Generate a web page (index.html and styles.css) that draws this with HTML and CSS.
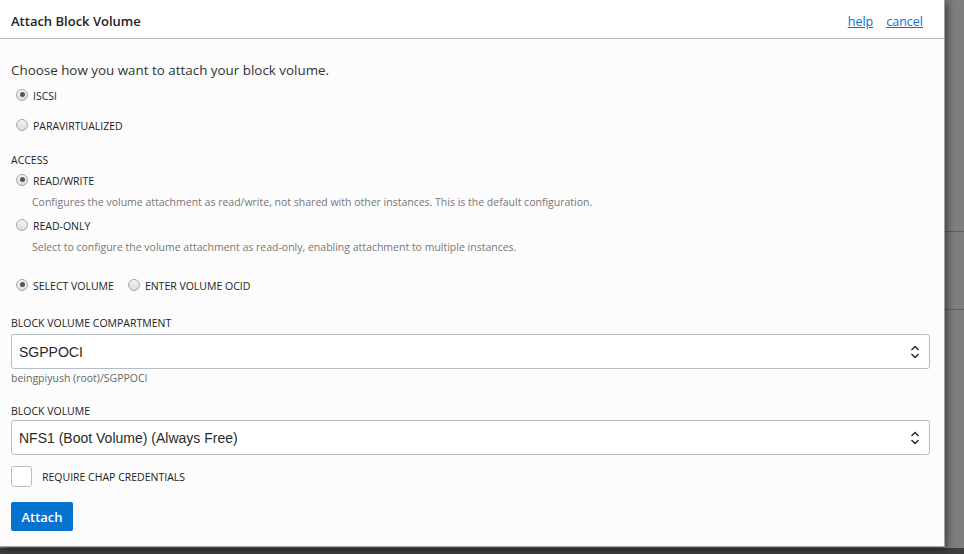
FILE: index.html
```html
<!DOCTYPE html>
<html lang="en">
<head>
    <meta charset="UTF-8">
    <meta name="viewport" content="width=device-width, initial-scale=1.0">
    <title>Attach Block Volume</title>
    <link rel="stylesheet" href="styles.css">
</head>
<body>
    <div class="backdrop">
        <div class="bg-row first"></div>
        <div class="bg-row second"></div>
        <div class="bg-row third"></div>
        <div class="bg-footer"></div>
    </div>

    <div class="panel">
        <div class="panel-header">
            <h1>Attach Block Volume</h1>
            <div class="header-links">
                <a href="#">help</a>
                <a href="#">cancel</a>
            </div>
        </div>

        <div class="panel-body">
            <p class="intro">Choose how you want to attach your block volume.</p>

            <label class="radio"><span class="dot checked"></span>ISCSI</label>
            <label class="radio"><span class="dot"></span>PARAVIRTUALIZED</label>

            <div class="section-label access">ACCESS</div>
            <label class="radio tight"><span class="dot checked"></span>READ/WRITE</label>
            <div class="hint">Configures the volume attachment as read/write, not shared with other instances. This is the default configuration.</div>
            <label class="radio tight"><span class="dot"></span>READ-ONLY</label>
            <div class="hint">Select to configure the volume attachment as read-only, enabling attachment to multiple instances.</div>

            <div class="radio-row">
                <label class="radio tight"><span class="dot checked"></span>SELECT VOLUME</label>
                <label class="radio tight"><span class="dot"></span>ENTER VOLUME OCID</label>
            </div>

            <div class="section-label compartment">BLOCK VOLUME COMPARTMENT</div>
            <div class="select">
                <span>SGPPOCI</span>
                <svg class="chevrons" width="10" height="14" viewBox="0 0 10 14">
                    <path d="M1.5 5 L5 1.5 L8.5 5 M1.5 9 L5 12.5 L8.5 9" fill="none" stroke="#222" stroke-width="1.4"/>
                </svg>
            </div>
            <div class="helper">beingpiyush (root)/SGPPOCI</div>

            <div class="section-label volume">BLOCK VOLUME</div>
            <div class="select">
                <span>NFS1 (Boot Volume) (Always Free)</span>
                <svg class="chevrons" width="10" height="14" viewBox="0 0 10 14">
                    <path d="M1.5 5 L5 1.5 L8.5 5 M1.5 9 L5 12.5 L8.5 9" fill="none" stroke="#222" stroke-width="1.4"/>
                </svg>
            </div>

            <label class="checkbox"><span class="box"></span>REQUIRE CHAP CREDENTIALS</label>

            <button class="attach">Attach</button>
        </div>
    </div>
</body>
</html>
```

FILE: styles.css
```css
body {
    margin: 0;
    height: 554px;
    overflow: hidden;
    background: #7e7e7e;
    font-family: "Open Sans", "Noto Sans", sans-serif;
    color: #333;
}

.backdrop {
    display: flex;
    flex-direction: column;
    height: 554px;
}

.bg-row {
    border-bottom: 1px solid #5f5f5f;
}

.bg-row.first { height: 231px; }
.bg-row.second { height: 77px; }
.bg-row.third { flex: 1; border-bottom: none; }

.bg-footer {
    height: 6px;
    background: #3e3e3e;
}

.panel {
    position: absolute;
    top: 0;
    left: 0;
    width: 944px;
    height: 546px;
    background: #fcfcfc;
    border-right: 1px solid #9aa3ad;
    border-bottom: 1px solid #9aa3ad;
    box-shadow: 2px 2px 8px rgba(0, 0, 0, 0.55);
}

.panel-header {
    display: flex;
    justify-content: space-between;
    align-items: center;
    box-sizing: border-box;
    height: 39px;
    padding: 4px 21px 0 11px;
    background: #fff;
    border-bottom: 1px solid #b4bcc6;
}

.panel-header h1 {
    margin: 0;
    font-size: 13px;
    font-weight: 600;
    color: #222;
}

.header-links {
    display: flex;
    gap: 13px;
}

.header-links a {
    font-size: 12.5px;
    color: #0572ce;
}

.panel-body {
    padding: 21px 11px 0 11px;
    display: flex;
    flex-direction: column;
    align-items: flex-start;
}

.intro {
    margin: 0 0 1px 0;
    font-size: 13.4px;
    line-height: 20px;
    color: #333;
}

.radio {
    display: flex;
    align-items: center;
    height: 30px;
    font-size: 10.5px;
    color: #222;
    padding-left: 5px;
}

.radio.tight {
    height: 22px;
}

.dot {
    box-sizing: border-box;
    width: 12px;
    height: 12px;
    border-radius: 50%;
    border: 1px solid #a8a8a8;
    background: linear-gradient(#f4f4f4, #dcdcdc);
    margin-right: 5px;
    margin-top: -3px;
    position: relative;
}

.dot.checked::after {
    content: "";
    position: absolute;
    top: 2.5px;
    left: 2.5px;
    width: 5px;
    height: 5px;
    border-radius: 50%;
    background: #555;
}

.section-label {
    font-size: 10.5px;
    color: #222;
    height: 14px;
    line-height: 14px;
}

.section-label.access {
    margin-top: 12px;
    margin-bottom: 3px;
}

.section-label.compartment {
    margin-top: 19px;
    margin-bottom: 4px;
}

.section-label.volume {
    margin-top: 19px;
    margin-bottom: 2px;
}

.hint {
    font-size: 10.5px;
    line-height: 14px;
    color: #777;
    padding-left: 21px;
    margin: 3px 0 7px 0;
}

.hint + .radio {
    margin-top: -1px;
}

.radio-row {
    display: flex;
    gap: 9px;
    margin-top: 14px;
}

.select {
    box-sizing: border-box;
    width: 919px;
    height: 35px;
    display: flex;
    align-items: center;
    justify-content: space-between;
    padding: 0 9px 0 7px;
    background: #fff;
    border: 1px solid #b4bcc6;
    border-radius: 3px;
    font-family: "Liberation Sans", Arial, sans-serif;
    font-size: 14px;
    color: #2a2a2a;
}

.helper {
    font-size: 10.5px;
    line-height: 14px;
    color: #666;
    margin-top: 2px;
}

.checkbox {
    display: flex;
    align-items: center;
    margin-top: 11px;
    font-size: 10.5px;
    color: #222;
}

.box {
    box-sizing: border-box;
    width: 21px;
    height: 21px;
    border: 1px solid #b4bcc6;
    border-radius: 3px;
    background: #fff;
    margin-right: 10px;
}

.attach {
    margin-top: 15px;
    width: 62px;
    height: 29px;
    border: none;
    border-radius: 2px;
    background: #0572ce;
    color: #fff;
    font-family: "Open Sans", "Noto Sans", sans-serif;
    font-size: 13px;
    font-weight: 600;
    cursor: pointer;
}
```
